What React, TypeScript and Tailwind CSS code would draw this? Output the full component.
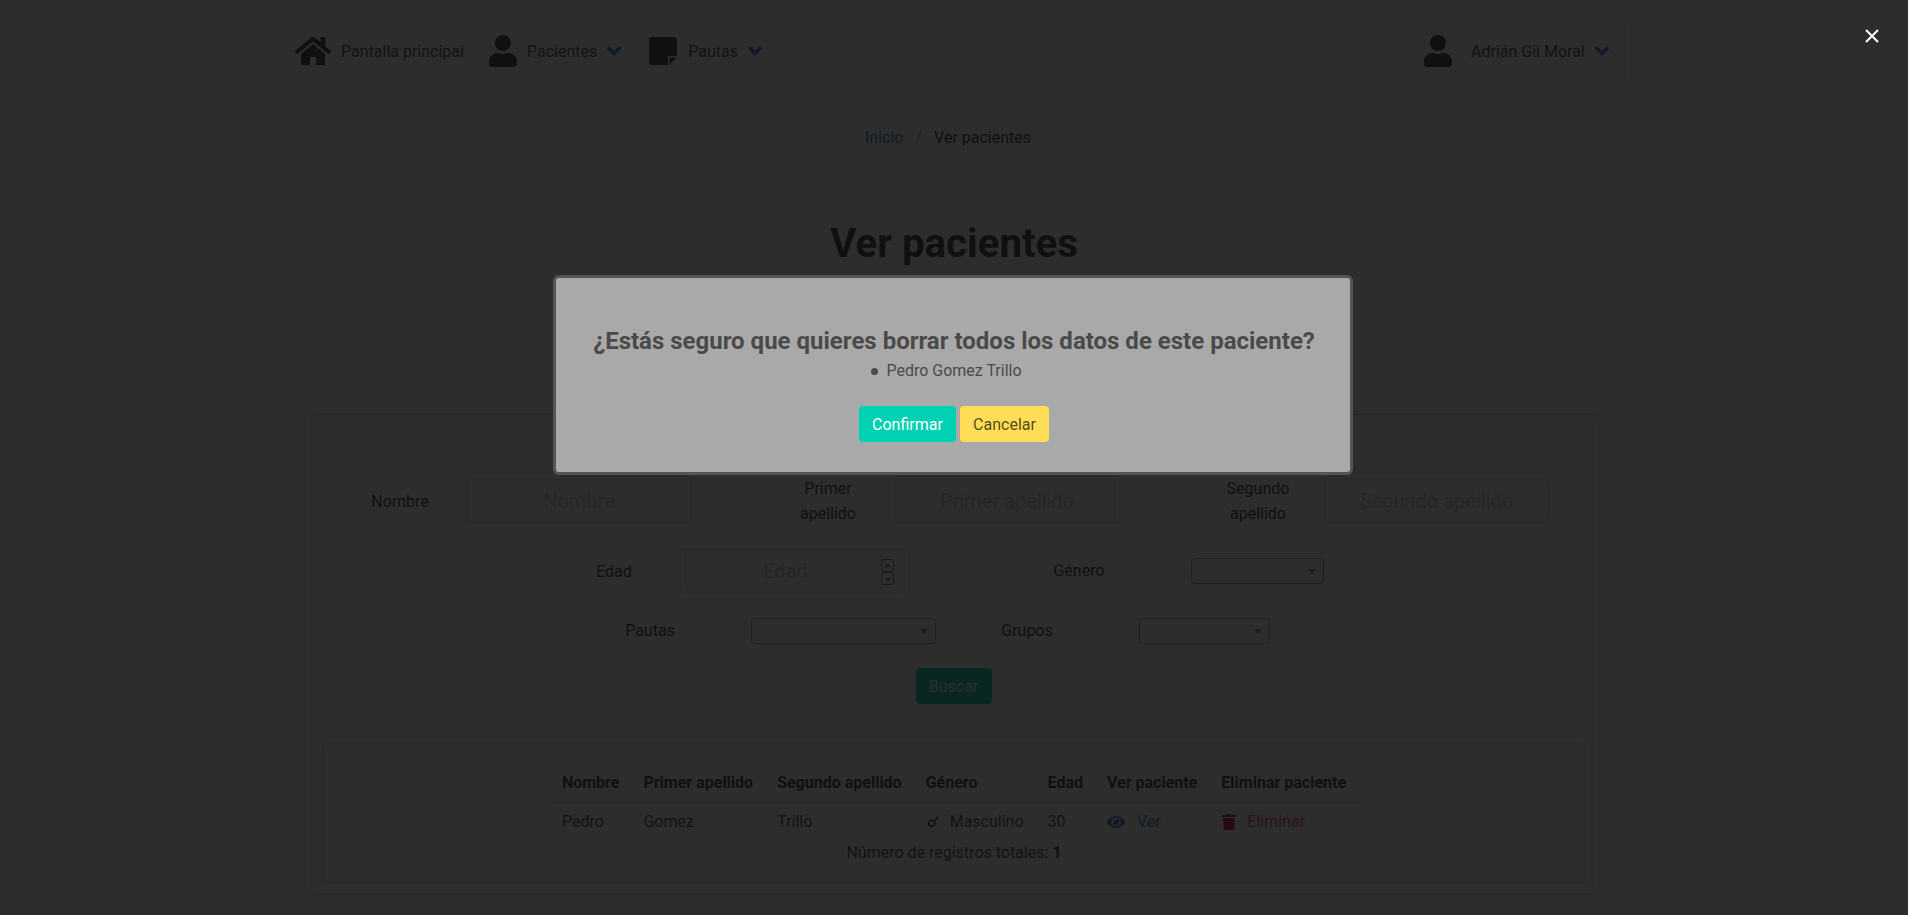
import React from "react";
import { FaHome, FaUser, FaAngleDown, FaEye, FaTrash, FaMars } from "react-icons/fa";
import { ChevronUp, ChevronDown } from "lucide-react";

function Chevron({ className }: { className?: string }) {
  return <FaAngleDown className={"text-[#3273dc] text-[22px] " + (className ?? "")} />;
}

function NoteIcon() {
  return (
    <svg viewBox="0 0 28 28" className="ml-[24px] h-[28px] w-[28px] text-[#363636]" fill="currentColor">
      <path d="M3 0H25a3 3 0 0 1 3 3V19H19V28H3a3 3 0 0 1-3-3V3a3 3 0 0 1 3-3Z" />
      <path d="M20.5 20.5H27.5L20.5 27.5Z" />
    </svg>
  );
}

function Field({ placeholder, label, w = "w-[226px]" }: { placeholder: string; label: string; w?: string }) {
  return (
    <div className="flex h-[44px] items-center">
      <div className="w-[132px] text-center leading-[25px] text-[#363636] px-[24px]">{label}</div>
      <input
        placeholder={placeholder}
        className={"h-[44px] rounded-[4px] border border-[#dbdbdb] text-center text-[20px] placeholder:text-[#363636]/30 " + w}
      />
    </div>
  );
}

function Select({ w }: { w: string }) {
  return (
    <div className={"relative h-[26px] rounded-[4px] border border-[#aaaaaa] bg-white " + w}>
      <span className="absolute right-[7px] top-[10px] h-0 w-0 border-x-[4px] border-t-[5px] border-x-transparent border-t-[#888888]" />
    </div>
  );
}

const thClass = "px-[12px] h-[37px] text-left font-bold text-[#363636] border-b border-[#dbdbdb] align-middle";
const tdClass = "px-[12px] h-[40px] text-[#4a4a4a] align-middle";

export default function App() {
  return (
    <div className="relative h-[915px] w-[1908px] overflow-hidden bg-white font-['Roboto',sans-serif] text-[16px] text-[#4a4a4a]">
      <nav className="flex h-[102px] items-center pl-[295px] pr-[283px] text-[#4a4a4a]">
        <FaHome className="w-[36px] h-[32px] text-[#363636]" />
        <span className="ml-[10px] mt-[2px]">Pantalla principal</span>
        <FaUser className="ml-[25px] w-[28px] h-[32px] text-[#363636]" />
        <span className="ml-[10px] mt-[2px]">Pacientes</span>
        <Chevron className="ml-[6px]" />
        <NoteIcon />
        <span className="ml-[11px] mt-[2px]">Pautas</span>
        <Chevron className="ml-[6px]" />
        <div className="ml-auto flex h-[51px] w-[215px] items-center border-x border-[#e5e5e5] pl-[13px]">
          <FaUser className="w-[28px] h-[32px] text-[#363636]" />
          <span className="ml-[19px] mt-[2px]">Adrián Gil Moral</span>
          <Chevron className="ml-[6px]" />
        </div>
      </nav>

      <div className="mt-[24px] flex h-[24px] items-center justify-center pr-[12px]">
        <span className="text-[#3273dc]">Inicio</span>
        <span className="mx-[12px] text-[#b5b5b5]">/</span>
        <span className="text-[#363636]">Ver pacientes</span>
      </div>

      <h1 className="mt-[69px] text-center text-[40.25px] leading-[50px] font-bold text-[#363636]">Ver pacientes</h1>

      <section className="ml-[310px] mt-[145px] h-[481px] w-[1289px] rounded-[6px] border border-[#dbdbdb] bg-white pt-[64px]">
        <div className="ml-[23px] flex">
          <Field label="Nombre" placeholder="Nombre" />
          <div className="ml-[70px]">
            <Field label="Primer apellido" placeholder="Primer apellido" />
          </div>
          <div className="ml-[72px]">
            <Field label="Segundo apellido" placeholder="Segundo apellido" w="w-[225px]" />
          </div>
        </div>

        <div className="ml-[237px] mt-[26px] flex items-center">
          <div className="relative flex items-center">
            <Field label="Edad" placeholder="Edad" w="w-[225px] pr-[14px]" />
            <div className="absolute right-[11px] top-[10px] flex flex-col">
              <span className="flex h-[13px] w-[13px] items-center justify-center rounded-[3px] border border-[#767676]">
                <ChevronUp size={10} strokeWidth={2.5} className="text-[#111111]" />
              </span>
              <span className="flex h-[13px] w-[13px] items-center justify-center rounded-[3px] border border-[#767676]">
                <ChevronDown size={10} strokeWidth={2.5} className="text-[#111111]" />
              </span>
            </div>
          </div>
          <div className="ml-[108px] w-[132px] text-center text-[#363636]">Género</div>
          <div className="ml-[46px]">
            <Select w="w-[133px]" />
          </div>
        </div>

        <div className="ml-[289px] mt-[25px] flex items-center">
          <div className="w-[100px] text-center text-[#363636]">Pautas</div>
          <div className="ml-[51px]">
            <Select w="w-[185px]" />
          </div>
          <div className="ml-[41px] w-[100px] text-center text-[#363636]">Grupos</div>
          <div className="ml-[62px]">
            <Select w="w-[131px]" />
          </div>
        </div>

        <div className="mt-[24px] flex justify-center pr-[2px]">
          <button className="h-[36px] w-[76px] rounded-[4px] bg-[#00d1b2] pt-[1px] text-white">Buscar</button>
        </div>

        <div className="ml-[11px] mt-[39px] h-[140px] w-[1264px] rounded-[6px] border border-[#dbdbdb] bg-white pt-[21px]">
          <table className="mx-auto border-collapse">
            <thead>
              <tr>
                <th className={thClass}>Nombre</th>
                <th className={thClass}>Primer apellido</th>
                <th className={thClass}>Segundo apellido</th>
                <th className={thClass}>Género</th>
                <th className={thClass}>Edad</th>
                <th className={thClass}>Ver paciente</th>
                <th className={thClass}>Eliminar paciente</th>
              </tr>
            </thead>
            <tbody>
              <tr>
                <td className={tdClass}>Pedro</td>
                <td className={tdClass}>Gomez</td>
                <td className={tdClass}>Trillo</td>
                <td className={tdClass}>
                  <span className="flex items-center">
                    <FaMars className="h-[14px] w-[14px] text-[#363636]" />
                    <span className="ml-[10px]">Masculino</span>
                  </span>
                </td>
                <td className={tdClass}>30</td>
                <td className={tdClass}>
                  <span className="flex items-center text-[#3273dc]">
                    <FaEye className="h-[16px] w-[18px]" />
                    <span className="ml-[12px]">Ver</span>
                  </span>
                </td>
                <td className={tdClass}>
                  <span className="flex items-center text-[#f14668]">
                    <FaTrash className="ml-[1px] h-[16px] w-[14px] text-[#cc0f35]" />
                    <span className="ml-[11px]">Eliminar</span>
                  </span>
                </td>
              </tr>
            </tbody>
          </table>
          <p className="mt-[-1px] text-center leading-[24px]">
            Número de registros totales: <b className="text-[#363636]">1</b>
          </p>
        </div>
      </section>

      <div className="absolute inset-0 flex justify-center bg-[rgba(10,10,10,0.86)] pt-[275px]">
        <div className="mr-[2px] flex h-[200px] w-[800px] flex-col items-center rounded-[6px] border-[3px] border-[#555555] bg-[#a9a9a9] pl-[2px] pt-[48px]">
          <h2 className="text-[24px] leading-[30px] font-bold text-[#4a4a4a]">
            ¿Estás seguro que quieres borrar todos los datos de este paciente?
          </h2>
          <ul className="mt-[3px] list-none pr-[15px] leading-[24px] text-[#4a4a4a]">
            <li className="flex items-center gap-[8px]">
              <span className="h-[7px] w-[7px] rounded-full bg-[#4a4a4a]" />
              Pedro Gomez Trillo
            </li>
          </ul>
          <div className="mt-[23px] flex gap-[4px]">
            <button className="h-[36px] w-[97px] rounded-[4px] bg-[#00d1b2] pt-[1px] text-white">Confirmar</button>
            <button className="h-[36px] w-[89px] rounded-[4px] bg-[#ffdd57] pt-[1px] text-black/70">Cancelar</button>
          </div>
        </div>
        <button className="absolute right-[20px] top-[20px] flex h-[32px] w-[32px] items-center justify-center" aria-label="Cerrar">
          <svg width="14" height="14" viewBox="0 0 14 14" stroke="white" strokeWidth="2">
            <path d="M1 1 L13 13 M13 1 L1 13" />
          </svg>
        </button>
      </div>
    </div>
  );
}
